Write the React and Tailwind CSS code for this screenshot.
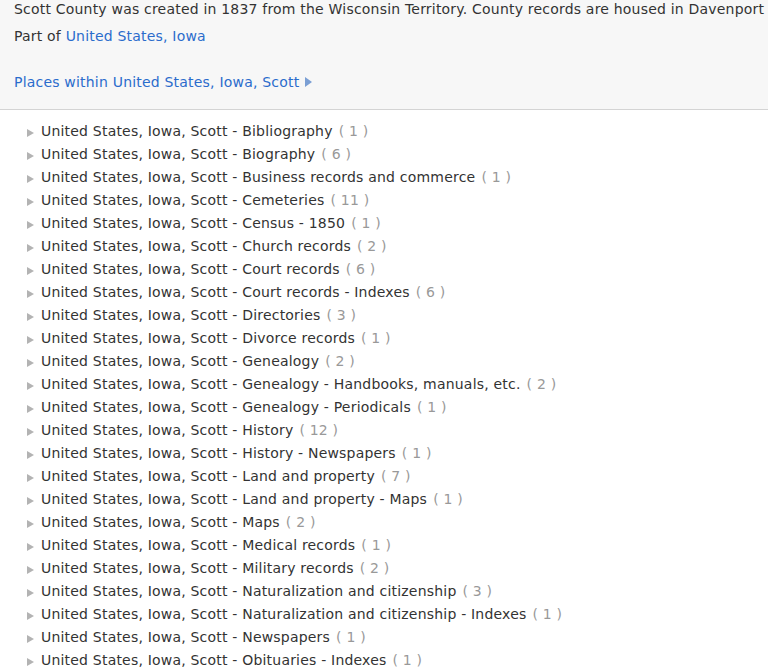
import React from 'react';

const items = [
  ['Bibliography', 1],
  ['Biography', 6],
  ['Business records and commerce', 1],
  ['Cemeteries', 11],
  ['Census - 1850', 1],
  ['Church records', 2],
  ['Court records', 6],
  ['Court records - Indexes', 6],
  ['Directories', 3],
  ['Divorce records', 1],
  ['Genealogy', 2],
  ['Genealogy - Handbooks, manuals, etc.', 2],
  ['Genealogy - Periodicals', 1],
  ['History', 12],
  ['History - Newspapers', 1],
  ['Land and property', 7],
  ['Land and property - Maps', 1],
  ['Maps', 2],
  ['Medical records', 1],
  ['Military records', 2],
  ['Naturalization and citizenship', 3],
  ['Naturalization and citizenship - Indexes', 1],
  ['Newspapers', 1],
  ['Obituaries - Indexes', 1],
];

export default function App() {
  return (
    <div className="w-[768px] h-[669px] overflow-hidden bg-white text-[#333] text-[14px] tracking-[0.2px]" style={{ fontFamily: '"DejaVu Sans", Verdana, sans-serif' }}>
      <div className="bg-[#f7f7f7] border-b border-[#d4d4d4] px-[14px] pb-[18px]">
        <p className="leading-[18px] whitespace-nowrap">
          Scott County was created in 1837 from the Wisconsin Territory. County records are housed in Davenport
        </p>
        <p className="leading-[18px] mt-[9px]">
          Part of <a href="#" className="text-[#2b6ccc]">United States, Iowa</a>
        </p>
        <a href="#" className="mt-[28px] flex items-center gap-[6px] leading-[18px] text-[#2b6ccc]">
          Places within United States, Iowa, Scott
          <svg width="7" height="10" viewBox="0 0 7 10"><path d="M0 0 L7 5 L0 10 Z" fill="#7b9fd4" /></svg>
        </a>
      </div>
      <ul className="pt-[10px] pl-[27px]">
        {items.map(([name, n]) => (
          <li key={name} className="flex items-center h-[23px] whitespace-nowrap">
            <svg width="7" height="8" viewBox="0 0 7 8" className="mr-[7px] mt-[2px]"><path d="M0 0 L7 4 L0 8 Z" fill="#b3b3b3" /></svg>
            <span>United States, Iowa, Scott - {name}</span>
            <span className="ml-[6px] text-[#999]">( {n} )</span>
          </li>
        ))}
      </ul>
    </div>
  );
}
